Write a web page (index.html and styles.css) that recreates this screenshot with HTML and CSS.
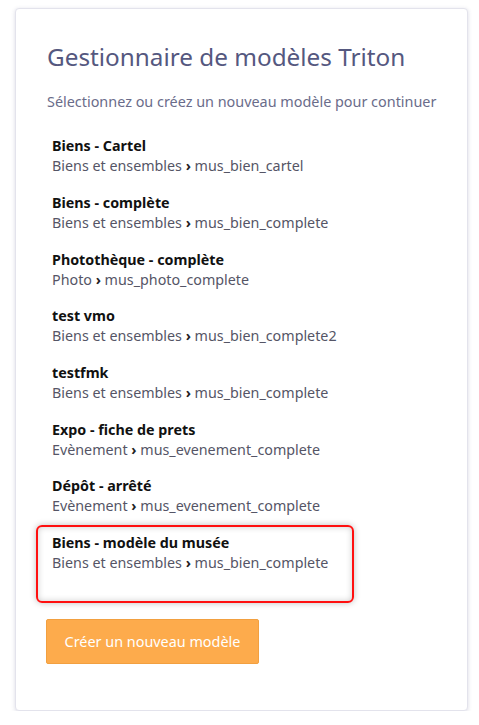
FILE: index.html
```html
<!DOCTYPE html>
<html>
<head>
  <title>Triton</title>
  <link rel="stylesheet" href="styles.css">
</head>
<body>
  <div class="card">
    <h1 class="card-title">Gestionnaire de modèles Triton</h1>
    <p class="card-lead">Sélectionnez ou créez un nouveau modèle pour continuer</p>

    <div class="model-list">
      <div class="model">
        <div class="model-name">Biens - Cartel</div>
        <div class="model-path">Biens et ensembles <span class="chev">&#x203A;</span> mus_bien_cartel</div>
      </div>
      <div class="model">
        <div class="model-name">Biens - complète</div>
        <div class="model-path">Biens et ensembles <span class="chev">&#x203A;</span> mus_bien_complete</div>
      </div>
      <div class="model">
        <div class="model-name">Photothèque - complète</div>
        <div class="model-path">Photo <span class="chev">&#x203A;</span> mus_photo_complete</div>
      </div>
      <div class="model">
        <div class="model-name">test vmo</div>
        <div class="model-path">Biens et ensembles <span class="chev">&#x203A;</span> mus_bien_complete2</div>
      </div>
      <div class="model">
        <div class="model-name">testfmk</div>
        <div class="model-path">Biens et ensembles <span class="chev">&#x203A;</span> mus_bien_complete</div>
      </div>
      <div class="model">
        <div class="model-name">Expo - fiche de prets</div>
        <div class="model-path">Evènement <span class="chev">&#x203A;</span> mus_evenement_complete</div>
      </div>
      <div class="model">
        <div class="model-name">Dépôt - arrêté</div>
        <div class="model-path">Evènement <span class="chev">&#x203A;</span> mus_evenement_complete</div>
      </div>
      <div class="model selected">
        <div class="model-name">Biens - modèle du musée</div>
        <div class="model-path">Biens et ensembles <span class="chev">&#x203A;</span> mus_bien_complete</div>
      </div>
    </div>

    <button class="btn-create">Créer un nouveau modèle</button>
  </div>
</body>
</html>
```

FILE: styles.css
```css
html, body {
  margin: 0;
  padding: 0;
  background: #fff;
  font-family: "Noto Sans", "Open Sans", Arial, sans-serif;
}

.card {
  box-sizing: border-box;
  width: 453px;
  margin: 8px 0 0 15px;
  padding: 33px 31px 46px 31px;
  border: 1px solid #e3e3ec;
  border-radius: 4px;
  box-shadow: 0 1px 4px rgba(60, 60, 110, 0.18);
  background: #fff;
}

.card-title {
  margin: 0;
  font-size: 24.3px;
  font-weight: normal;
  line-height: 30px;
  color: #55587f;
}

.card-lead {
  margin: 20px 0 16px 0;
  font-size: 14.4px;
  line-height: 20px;
  color: #6a6c8a;
  white-space: nowrap;
}

.model-list {
  margin-left: -11px;
  width: 318px;
}

.model {
  padding: 8.35px 16px;
  line-height: 20px;
  font-size: 14.3px;
}

.model-name {
  font-weight: bold;
  color: #111;
}

.model-path {
  color: #555566;
}

.chev {
  font-weight: bold;
  color: #222;
}

.model.selected {
  box-sizing: border-box;
  height: 78px;
  padding: 6.35px 14px;
  border: 2px solid #ff1010;
  border-radius: 6px;
  box-shadow: 0 0 6px rgba(0, 0, 0, 0.25), inset 0 0 6px rgba(0, 0, 0, 0.2);
}

.btn-create {
  display: block;
  margin-top: 16px;
  margin-left: -1px;
  width: 213px;
  height: 45px;
  font-family: inherit;
  font-size: 14.4px;
  color: #fff;
  background: #fdab4c;
  border: 1px solid #f2a040;
  border-radius: 2px;
  cursor: pointer;
}
```
